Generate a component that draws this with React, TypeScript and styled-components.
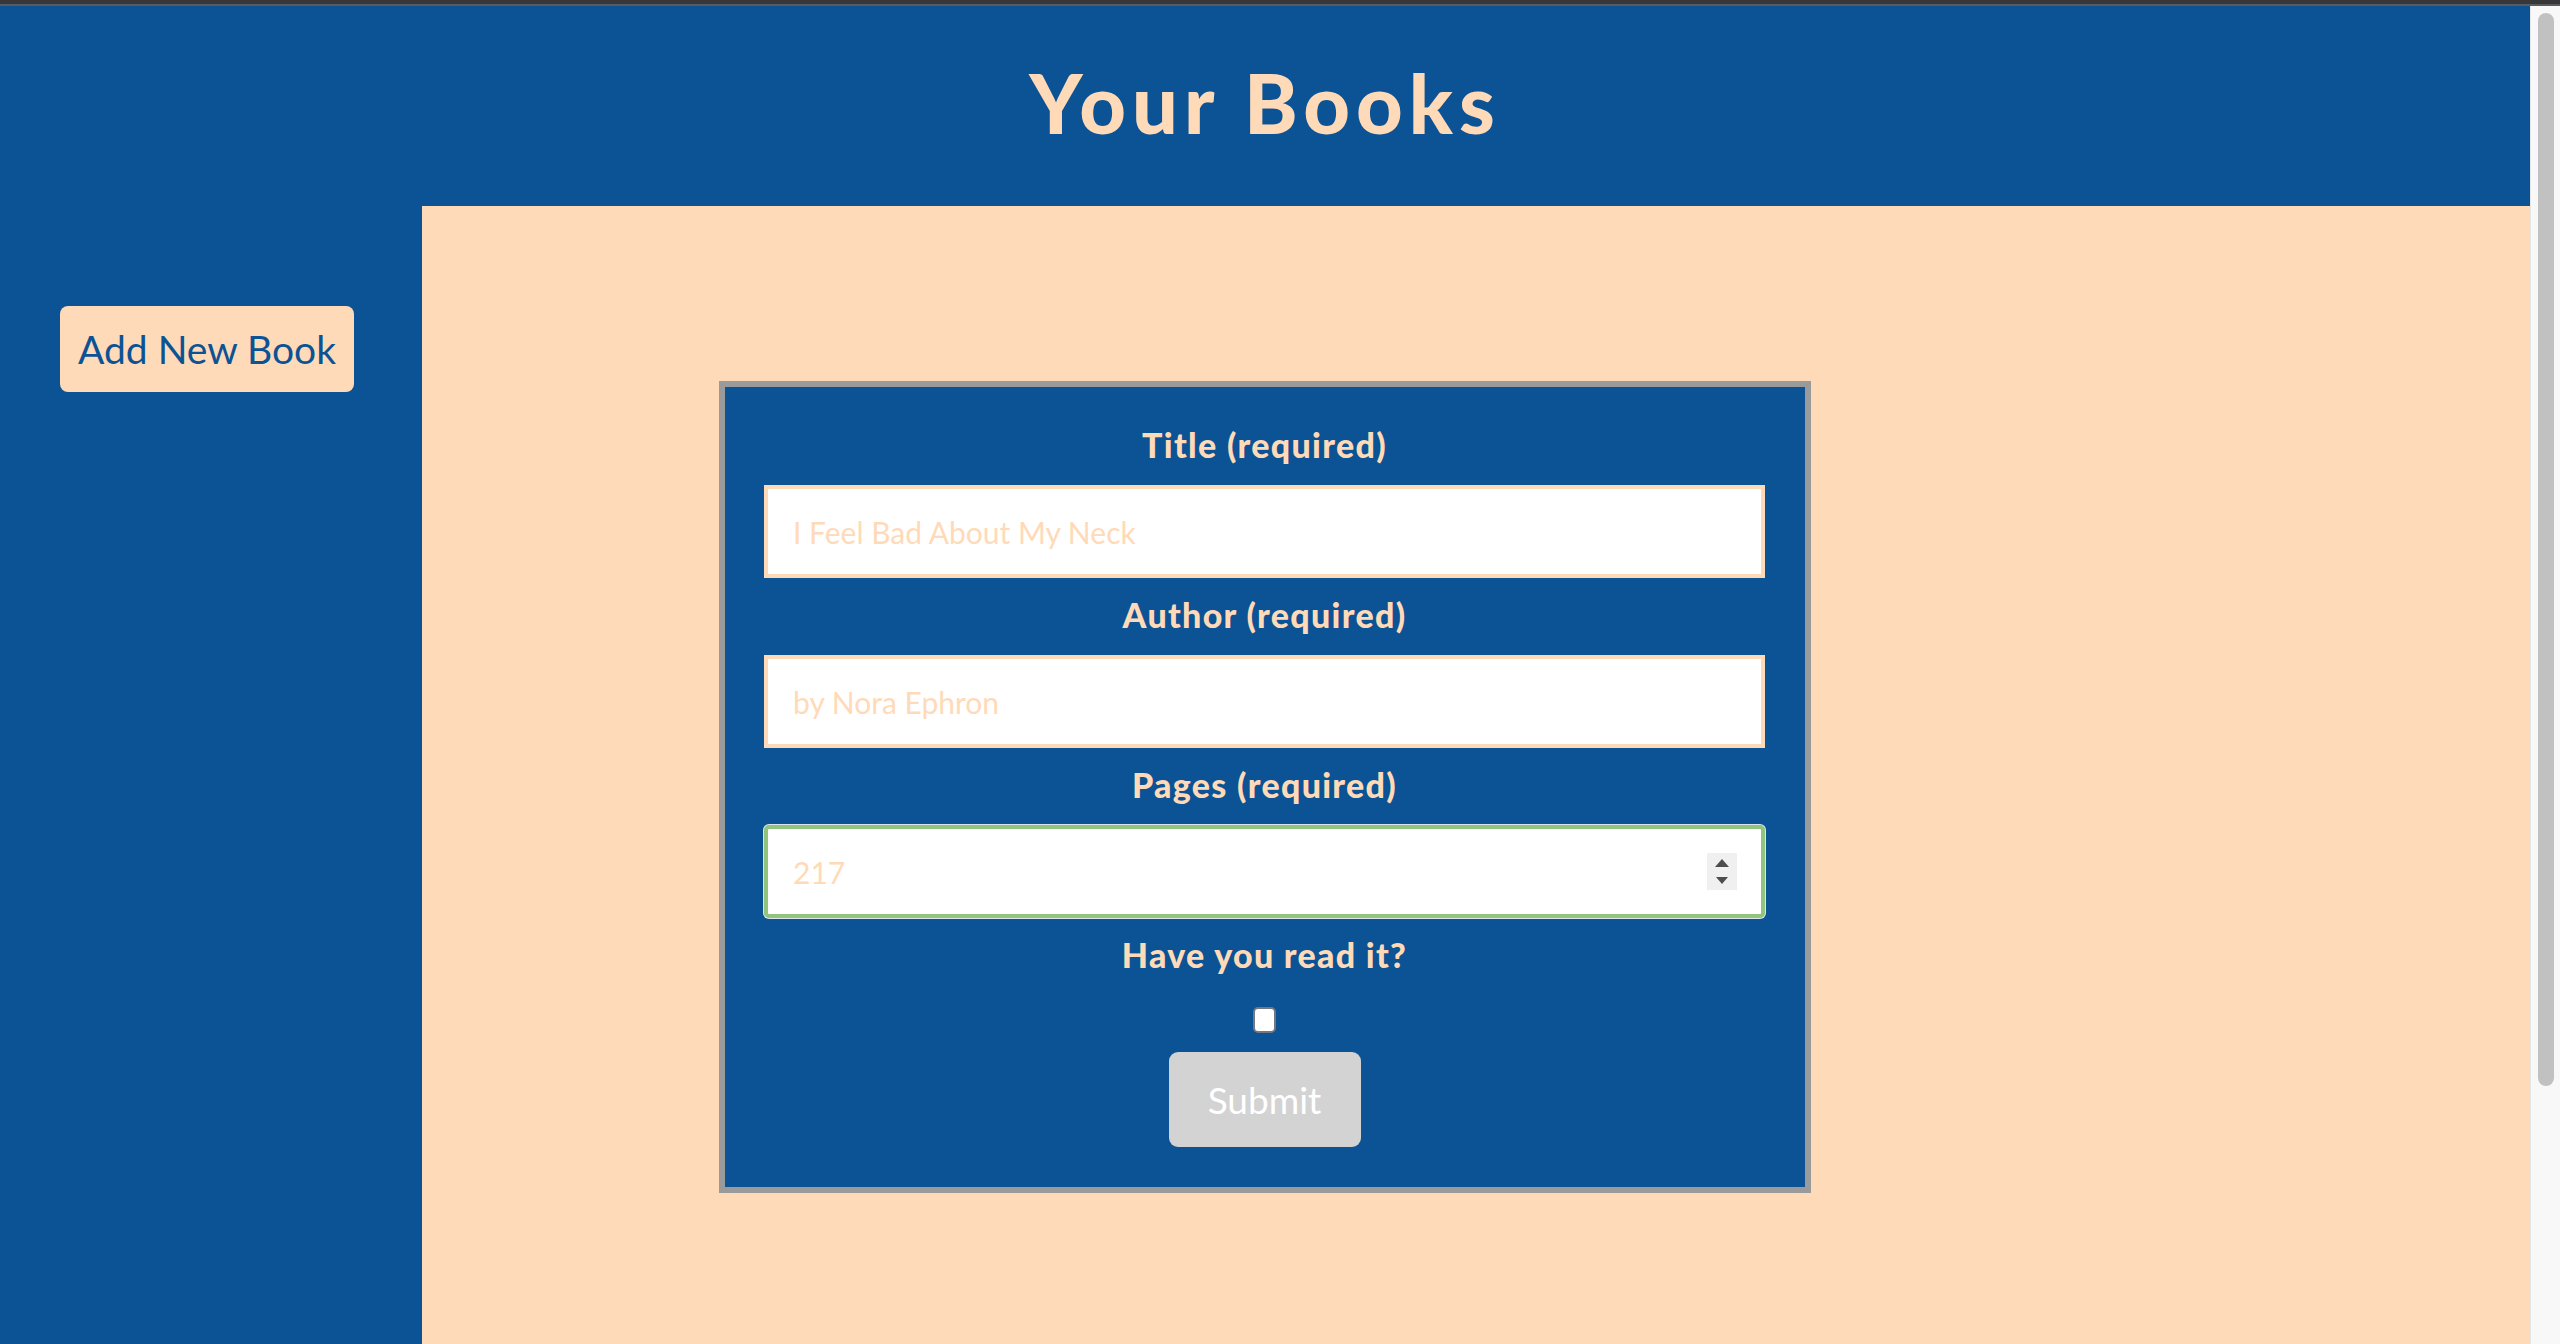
import React from 'react';
import styled, { createGlobalStyle } from 'styled-components';

const BLUE = '#0b5394';
const PEACH = '#ffdab9';
const GREEN = '#93c47d';

const GlobalStyle = createGlobalStyle`
  html, body { margin: 0; padding: 0; height: 100%; overflow: hidden; background: #fff; }
  body { font-family: Lato, "Open Sans", sans-serif; }
  #root { height: 100%; }
  * { box-sizing: border-box; }
`;

const Frame = styled.div`
  display: flex;
  flex-direction: column;
  height: 100vh;
`;

const WindowEdge = styled.div`
  flex: 0 0 auto;
  height: 6px;
  background: #37373a;
  border-bottom: 2px solid #595a5d;
`;

const Viewport = styled.div`
  flex: 1;
  min-height: 0;
  display: flex;
`;

const ScrollArea = styled.div`
  flex: 1;
  overflow-y: scroll;
  overflow-x: hidden;
  scrollbar-width: none;
  &::-webkit-scrollbar { display: none; }
`;

const ScrollRail = styled.div`
  flex: 0 0 30px;
  background: #f8f8f8;
  border-left: 1px solid #e6e6e6;
  padding: 7px 6px 0 7px;
`;

const ScrollThumb = styled.div`
  height: 1073px;
  background: #c1c1c1;
  border-radius: 8px;
`;

const Header = styled.header`
  height: 200px;
  padding-top: 47px;
  background: ${BLUE};
  text-align: center;
`;

const Title = styled.h1`
  margin: 0;
  font: 900 81px/100px Lato, sans-serif;
  letter-spacing: 6px;
  color: ${PEACH};
`;

const Content = styled.div`
  display: flex;
  min-height: 1447px;
`;

const Sidebar = styled.aside`
  flex: 0 0 422px;
  background: ${BLUE};
  padding: 100px 0 0 60px;
`;

const AddButton = styled.button`
  width: 294px;
  height: 86px;
  padding: 0;
  border: none;
  border-radius: 8px;
  background: ${PEACH};
  color: ${BLUE};
  font: 400 39px Lato, sans-serif;
  cursor: pointer;
`;

const Main = styled.main`
  flex: 1;
  background: ${PEACH};
  padding: 175px 0 0 297px;
`;

const FormCard = styled.form`
  width: 1092px;
  border: 6px solid #9a9a9a;
  background: ${BLUE};
  padding: 38px 40px 40px 39px;
  display: flex;
  flex-direction: column;
  align-items: center;
`;

const Label = styled.label`
  display: block;
  height: 40px;
  margin-bottom: 20px;
  font: 900 34px/40px Lato, sans-serif;
  letter-spacing: 1.3px;
  color: ${PEACH};
  text-align: center;
`;

const ReadLabel = styled(Label)`
  margin-bottom: 32px;
`;

const FieldWrap = styled.div`
  position: relative;
  width: 100%;
  margin-bottom: 17px;
`;

const TextInput = styled.input<{ $focused?: boolean }>`
  display: block;
  width: 100%;
  height: 93px;
  padding: 0 25px;
  background: #fff;
  border: 4px solid ${(p) => (p.$focused ? GREEN : PEACH)};
  border-radius: ${(p) => (p.$focused ? '5px' : '0')};
  box-shadow: ${(p) => (p.$focused ? '0 0 0 1px rgba(255,255,255,0.85)' : 'none')};
  font: 400 30px Lato, sans-serif;
  color: ${PEACH};
  outline: none;
  &::placeholder { color: ${PEACH}; opacity: 1; }
`;

const Spinner = styled.div`
  position: absolute;
  right: 28px;
  top: 28px;
  width: 30px;
  height: 37px;
  background: #f0f0f0;
  display: flex;
`;

const Check = styled.input`
  appearance: none;
  -webkit-appearance: none;
  width: 23px;
  height: 26px;
  margin: 0 0 19px;
  background: #fff;
  border: 2px solid #737880;
  border-radius: 5px;
`;

const Submit = styled.button`
  width: 192px;
  height: 95px;
  padding: 0;
  border: none;
  border-radius: 9px;
  background: #d3d3d3;
  color: #fff;
  font: 400 37px Lato, sans-serif;
`;

export default function App() {
  return (
    <>
      <GlobalStyle />
      <Frame>
        <WindowEdge />
        <Viewport>
          <ScrollArea>
            <Header>
              <Title>Your Books</Title>
            </Header>
            <Content>
              <Sidebar>
                <AddButton type="button">Add New Book</AddButton>
              </Sidebar>
              <Main>
                <FormCard onSubmit={(e) => e.preventDefault()}>
                  <Label htmlFor="title">Title (required)</Label>
                  <FieldWrap>
                    <TextInput id="title" placeholder="I Feel Bad About My Neck" />
                  </FieldWrap>
                  <Label htmlFor="author">Author (required)</Label>
                  <FieldWrap>
                    <TextInput id="author" placeholder="by Nora Ephron" />
                  </FieldWrap>
                  <Label htmlFor="pages">Pages (required)</Label>
                  <FieldWrap>
                    <TextInput id="pages" placeholder="217" $focused />
                    <Spinner>
                      <svg width="30" height="37" viewBox="0 0 30 37">
                        <polygon points="8,14 22,14 15,6" fill="#4d4d4d" />
                        <polygon points="9,24 21,24 15,31" fill="#4d4d4d" />
                      </svg>
                    </Spinner>
                  </FieldWrap>
                  <ReadLabel htmlFor="read">Have you read it?</ReadLabel>
                  <Check id="read" type="checkbox" />
                  <Submit type="submit">Submit</Submit>
                </FormCard>
              </Main>
            </Content>
          </ScrollArea>
          <ScrollRail>
            <ScrollThumb />
          </ScrollRail>
        </Viewport>
      </Frame>
    </>
  );
}
